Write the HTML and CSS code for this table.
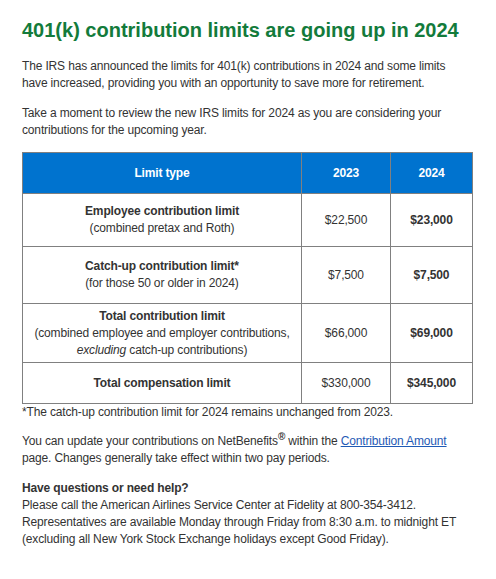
FILE: index.html
```html
<!DOCTYPE html>
<html>
<head>
<meta charset="utf-8">
<link rel="stylesheet" href="styles.css">
</head>
<body>
<div class="page">
  <h1 class="title">401(k) contribution limits are going up in 2024</h1>
  <p class="para">The IRS has announced the limits for 401(k) contributions in 2024 and some limits have increased, providing you with an opportunity to save more for retirement.</p>
  <p class="para">Take a moment to review the new IRS limits for 2024 as you are considering your contributions for the upcoming year.</p>
  <table class="limits">
    <thead>
      <tr>
        <th class="col-type">Limit type</th>
        <th class="col-2023">2023</th>
        <th class="col-2024">2024</th>
      </tr>
    </thead>
    <tbody>
      <tr class="row-1">
        <td><strong>Employee contribution limit</strong><br>(combined pretax and Roth)</td>
        <td>$22,500</td>
        <td><strong>$23,000</strong></td>
      </tr>
      <tr class="row-2">
        <td><strong>Catch-up contribution limit*</strong><br>(for those 50 or older in 2024)</td>
        <td>$7,500</td>
        <td><strong>$7,500</strong></td>
      </tr>
      <tr class="row-3">
        <td><strong>Total contribution limit</strong><br>(combined employee and employer contributions,<br><em>excluding</em> catch-up contributions)</td>
        <td>$66,000</td>
        <td><strong>$69,000</strong></td>
      </tr>
      <tr class="row-4">
        <td><strong>Total compensation limit</strong></td>
        <td>$330,000</td>
        <td><strong>$345,000</strong></td>
      </tr>
    </tbody>
  </table>
  <p class="note">*The catch-up contribution limit for 2024 remains unchanged from 2023.</p>
  <p class="para">You can update your contributions on NetBenefits<sup class="reg">®</sup> within the <a class="link" href="#">Contribution Amount</a> page. Changes generally take effect within two pay periods.</p>
  <p class="para"><strong>Have questions or need help?</strong><br>Please call the American Airlines Service Center at Fidelity at 800-354-3412. Representatives are available Monday through Friday from 8:30 a.m. to midnight ET (excluding all New York Stock Exchange holidays except Good Friday).</p>
</div>
</body>
</html>
```

FILE: styles.css
```css
html, body {
  margin: 0;
  padding: 0;
  background: #ffffff;
}
.page {
  width: 450px;
  padding: 18px 0 0 22px;
  font-family: "Liberation Sans", Arial, sans-serif;
  color: #333333;
  font-size: 12px;
  line-height: 17px;
  letter-spacing: -0.15px;
}
.title {
  margin: 0 0 16px 0;
  font-size: 20px;
  line-height: 24px;
  font-weight: bold;
  letter-spacing: 0;
  color: #137b3b;
}
.para {
  margin: 0 0 13px 0;
}
.limits {
  width: 451px;
  border-collapse: collapse;
  margin: 12px 0 0 0;
}
.limits th,
.limits td {
  border: 1px solid #808080;
  text-align: center;
  vertical-align: middle;
  padding: 0 2px;
}
.limits th {
  background: #0073cf;
  color: #ffffff;
  font-weight: bold;
  height: 40px;
}
.col-type { width: 274px; }
.col-2023 { width: 84px; }
.row-1 td { height: 52px; }
.row-2 td { height: 56px; }
.row-3 td { height: 58px; }
.row-4 td { height: 40px; }
.note {
  margin: 0 0 12px 0;
}
.reg {
  font-size: 10px;
  font-weight: bold;
  line-height: 0;
}
.link {
  color: #1f5ab5;
  text-decoration: underline;
}
```
